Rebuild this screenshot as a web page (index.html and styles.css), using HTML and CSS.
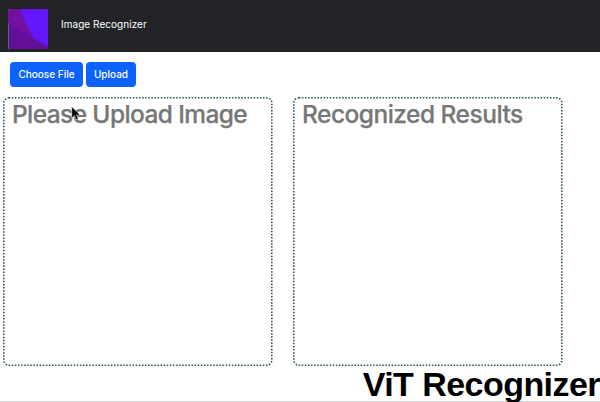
FILE: index.html
```html
<!DOCTYPE html>
<html lang="en">
<head>
<meta charset="utf-8">
<title>Image Recognizer</title>
<link rel="stylesheet" href="styles.css">
</head>
<body>
<header class="navbar">
  <svg class="logo" viewBox="0 0 40 40" aria-hidden="true">
    <rect width="40" height="40" fill="#6417ff"/>
    <path d="M0 0H12.5L18 15L26 29.5L0 14Z" fill="#72109f"/>
    <path d="M0 14L26 29.5L40 37.5V40H0Z" fill="#62109a"/>
    <path d="M.5 14V40M0 .5H1" stroke="#466b72"/>
  </svg>
  <span class="brand">Image Recognizer</span>
</header>
<main class="content">
  <div class="actions">
    <button class="btn choose">Choose File</button>
    <button class="btn upload">Upload</button>
  </div>
  <div class="panels">
    <section class="panel">
      <svg class="outline" viewBox="0 0 270 270" aria-hidden="true"><rect x=".8" y=".8" width="268" height="267.4" rx="5"/></svg>
      <h2 class="heading prompt">Please Upload Image</h2>
    </section>
    <section class="panel">
      <svg class="outline" viewBox="0 0 270 270" aria-hidden="true"><rect x=".8" y=".8" width="268" height="267.4" rx="5"/></svg>
      <h2 class="heading results">Recognized Results</h2>
    </section>
  </div>
</main>
<footer class="footer"><span class="caption">ViT Recognizer</span></footer>
<svg class="cursor" viewBox="0 0 10 15" aria-hidden="true"><path d="M.8.8V12L3.5 9.6L5.2 13.6L7.2 12.7L5.5 8.9H9Z"/></svg>
</body>
</html>
```
FILE: styles.css
```css
* { box-sizing: border-box; }
body {
  margin: 0;
  width: 600px;
  height: 402px;
  overflow: hidden;
  display: flex;
  flex-direction: column;
  background: #fff;
  font-family: Inter, "Liberation Sans", sans-serif;
}
.navbar {
  height: 52px;
  flex: none;
  display: flex;
  padding: 9px 8px;
  gap: 13px;
  background: #212326;
}
.logo { width: 40px; height: 40px; }
.brand {
  color: #fff;
  font-size: 10px;
  line-height: 16px;
  margin-top: 7px;
  letter-spacing: 0.04px;
  white-space: nowrap;
}
.content { flex: none; height: 315px; padding-top: 10px; }
.actions { display: flex; gap: 3px; padding-left: 10px; height: 25px; }
.btn {
  height: 25px;
  padding: 0;
  border: 0;
  border-radius: 4px;
  background: #0d62fd;
  color: #fff;
  font: 500 10px/25px Inter, sans-serif;
  letter-spacing: 0;
  white-space: nowrap;
}
.choose { width: 73px; }
.upload { width: 50px; }
.panels { display: flex; gap: 20px; margin-top: 10px; padding-left: 3px; }
.panel { position: relative; width: 270px; height: 270px; padding: 2px 9px; }
.outline { position: absolute; inset: 0; width: 270px; height: 270px; }
.outline rect { fill: none; stroke: #2f5057; stroke-width: 1.6; stroke-dasharray: 1.5 1.6; }
.heading {
  position: relative;
  margin: 0;
  font-size: 24.5px;
  font-weight: 500;
  line-height: 30px;
  color: #777;
  white-space: nowrap;
  -webkit-text-stroke: 0.25px #777;
}
.prompt { letter-spacing: -0.6px; }
.results { letter-spacing: -0.52px; }
.footer {
  flex: 1;
  display: flex;
  justify-content: flex-end;
  border-bottom: 1px solid #cfcfcf;
}
.caption {
  font: bold 34px/34px "Liberation Sans", Arial, sans-serif;
  letter-spacing: -0.55px;
  color: #000;
  white-space: nowrap;
}
.cursor { position: absolute; left: 71px; top: 106px; width: 10px; height: 15px; }
.cursor path { fill: #000; stroke: #ddd; stroke-width: .5; }
```
